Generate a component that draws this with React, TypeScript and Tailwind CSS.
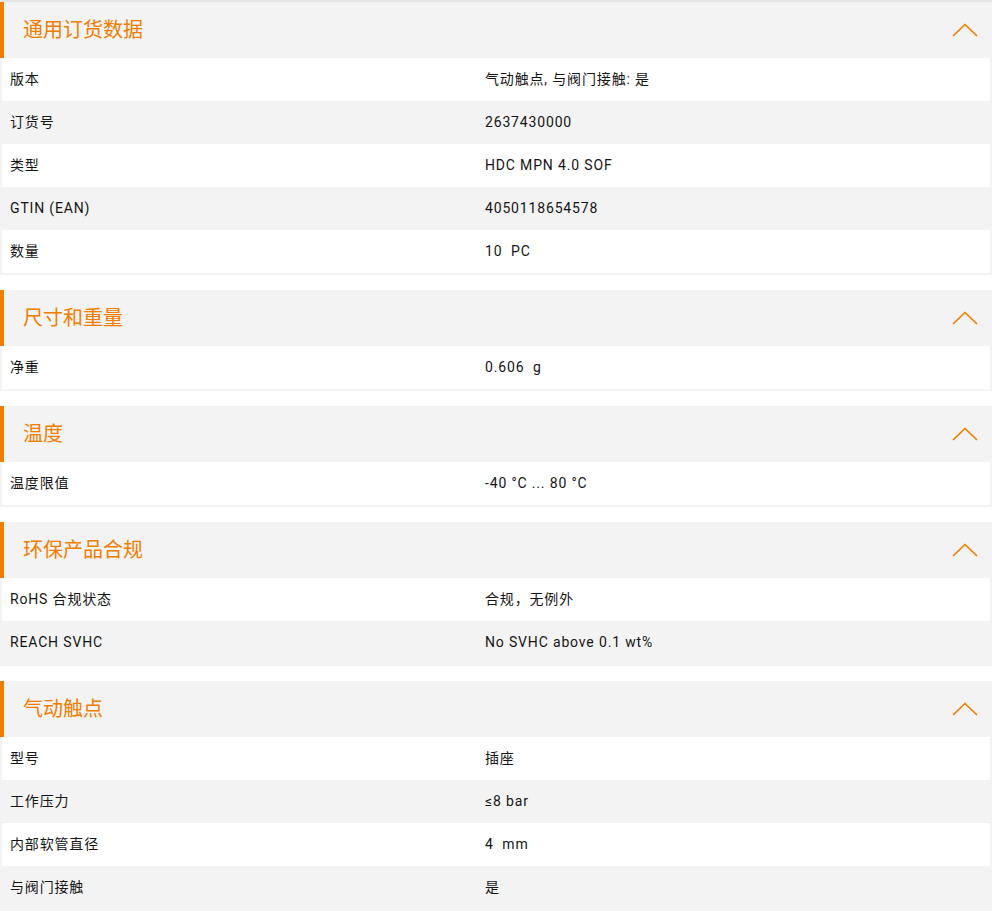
import { ReactNode } from "react";

type Row = { label: string; value: ReactNode };
type Section = { title: string; rows: Row[] };

const sections: Section[] = [
  {
    title: "通用订货数据",
    rows: [
      { label: "版本", value: "气动触点, 与阀门接触: 是" },
      { label: "订货号", value: "2637430000" },
      { label: "类型", value: "HDC MPN 4.0 SOF" },
      { label: "GTIN (EAN)", value: "4050118654578" },
      { label: "数量", value: "10\u00a0 PC" },
    ],
  },
  {
    title: "尺寸和重量",
    rows: [{ label: "净重", value: "0.606\u00a0 g" }],
  },
  {
    title: "温度",
    rows: [{ label: "温度限值", value: "-40 °C ... 80 °C" }],
  },
  {
    title: "环保产品合规",
    rows: [
      { label: "RoHS 合规状态", value: "合规，无例外" },
      { label: "REACH SVHC", value: "No SVHC above 0.1 wt%" },
    ],
  },
  {
    title: "气动触点",
    rows: [
      { label: "型号", value: "插座" },
      { label: "工作压力", value: "≤8 bar" },
      { label: "内部软管直径", value: "4\u00a0 mm" },
      { label: "与阀门接触", value: "是" },
    ],
  },
];

function ChevronUp() {
  return (
    <svg width="26" height="16" viewBox="0 0 26 16" fill="none" className="mr-[14px]">
      <path d="M1.5 13.5 L13 2.5 L24.5 13.5" stroke="#f07d00" strokeWidth="1.7" strokeLinecap="round" strokeLinejoin="round" />
    </svg>
  );
}

function SpecSection({ section }: { section: Section }) {
  return (
    <div className="mb-[15px] bg-[#f3f3f3]">
      <div className="flex h-[56px] items-center justify-between border-l-4 border-[#ef7d00]">
        <span className="pl-[19px] text-[20px] tracking-normal text-[#f07d00]">{section.title}</span>
        <ChevronUp />
      </div>
      <div className="px-[2px] pb-[2px]">
        {section.rows.map((r, i) => (
          <div
            key={r.label}
            className={`grid h-[43px] grid-cols-[475px_1fr] items-center px-2 ${i % 2 === 0 ? "bg-white" : "bg-[#f3f3f3]"}`}
          >
            <span>{r.label}</span>
            <span>{r.value}</span>
          </div>
        ))}
      </div>
    </div>
  );
}

export default function App() {
  return (
    <div
      className="w-[992px] border-t-2 border-[#e6e6e6] bg-white text-[14px] tracking-[0.06em] text-[#151515]"
      style={{ fontFamily: 'Roboto, "Noto Sans CJK SC", sans-serif' }}
    >
      {sections.map((s) => (
        <SpecSection key={s.title} section={s} />
      ))}
    </div>
  );
}
